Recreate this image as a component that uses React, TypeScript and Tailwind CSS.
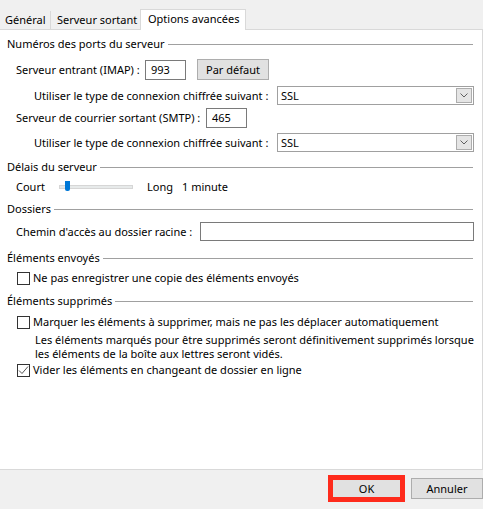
import React from 'react'

const font = { fontFamily: '"Noto Sans", "Open Sans", sans-serif' }

function SectionHeader({ children, className = '' }: { children: React.ReactNode; className?: string }) {
  return (
    <div className={`flex items-center h-[16px] pl-[7px] pr-[9px] ${className}`}>
      <span className="whitespace-nowrap">{children}</span>
      <div className="flex-1 h-px bg-[#a0a0a0] ml-[3px]" />
    </div>
  )
}

function TextBox({ value, className = '' }: { value?: string; className?: string }) {
  return (
    <div className={`h-[20px] border border-[#7a7a7a] bg-white flex items-center pl-[5px] ${className}`}>
      {value}
    </div>
  )
}

function Select({ value }: { value: string }) {
  return (
    <div className="w-[197px] h-[19px] border border-[#a0a0a0] bg-white flex items-center pl-[3px] pr-px">
      <span className="flex-1">{value}</span>
      <div className="w-[16px] h-[15px] border border-[#adadad] bg-[#e5e5e5] flex items-center justify-center">
        <svg width="8" height="5" viewBox="0 0 8 5">
          <path d="M0.5 0.5 L4 4 L7.5 0.5" fill="none" stroke="#606060" strokeWidth="1" />
        </svg>
      </div>
    </div>
  )
}

function Checkbox({ checked = false }: { checked?: boolean }) {
  return (
    <div className="w-[13px] h-[13px] border border-[#333333] bg-white flex items-center justify-center shrink-0">
      {checked && (
        <svg width="11" height="11" viewBox="0 0 11 11">
          <path d="M1 5.5 L4 8.5 L10 1.5" fill="none" stroke="#555555" strokeWidth="1" />
        </svg>
      )}
    </div>
  )
}

function Button({ children, className = '' }: { children: React.ReactNode; className?: string }) {
  return (
    <div className={`h-[21px] border border-[#adadad] bg-[#e1e1e1] flex items-center justify-center whitespace-nowrap ${className}`}>
      {children}
    </div>
  )
}

export default function App() {
  return (
    <div className="w-[483px] h-[509px] flex flex-col bg-[#f0f0f0] text-[11px] leading-[16px] text-black whitespace-nowrap" style={font}>
      {/* tabs */}
      <div className="h-[30px] flex items-end border-b border-[#d9d9d9]">
        <div className="h-[18px] w-[51px] border-r border-[#d9d9d9] flex items-center pl-[5px]">Général</div>
        <div className="h-[18px] w-[89px] flex items-center pl-[6px]">Serveur sortant</div>
        <div className="h-[21px] w-[106px] -mb-px bg-white border border-b-0 border-[#d9d9d9] flex items-center pl-[7px] pb-[2px]">
          Options avancées
        </div>
      </div>

      {/* panel */}
      <div className="h-[440px] bg-white border-r border-b border-[#d9d9d9] flex flex-col">
        <SectionHeader className="mt-[6px]">Numéros des ports du serveur</SectionHeader>

        <div className="mt-[7px] h-[21px] flex items-center pl-[16px]">
          <span className="w-[129px]">Serveur entrant (IMAP) :</span>
          <TextBox value="993" className="w-[41px]" />
          <Button className="ml-[11px] w-[72px]">Par défaut</Button>
        </div>

        <div className="mt-[6px] h-[19px] flex items-center pl-[34px]">
          <span className="w-[243px]">Utiliser le type de connexion chiffrée suivant :</span>
          <Select value="SSL" />
        </div>

        <div className="mt-[3px] h-[20px] flex items-center pl-[16px]">
          <span className="w-[190px]">Serveur de courrier sortant (SMTP) :</span>
          <TextBox value="465" className="w-[41px]" />
        </div>

        <div className="mt-[5px] h-[19px] flex items-center pl-[34px]">
          <span className="w-[243px]">Utiliser le type de connexion chiffrée suivant :</span>
          <Select value="SSL" />
        </div>

        <SectionHeader className="mt-[7px]">Délais du serveur</SectionHeader>

        <div className="mt-[4px] h-[16px] flex items-center pl-[16px]">
          <span className="w-[43px]">Court</span>
          <div className="relative w-[74px] h-[4px] bg-[#e7eaea] border border-[#d6d6d6]">
            <div className="absolute left-[5px] top-[-5px] w-[5px] h-[10px] bg-[#0078d7] rounded-b-[2px]" />
          </div>
          <span className="ml-[14px] w-[35px]">Long</span>
          <span>1 minute</span>
        </div>

        <SectionHeader className="mt-[6px]">Dossiers</SectionHeader>

        <div className="mt-[5px] h-[19px] flex items-center pl-[16px]">
          <span className="w-[184px]">Chemin d'accès au dossier racine :</span>
          <div className="w-[274px] h-[19px] border border-[#7a7a7a] bg-white" />
        </div>

        <SectionHeader className="mt-[9px]">Éléments envoyés</SectionHeader>

        <div className="mt-[4px] h-[16px] flex items-center pl-[17px]">
          <Checkbox />
          <span className="ml-[3px]">Ne pas enregistrer une copie des éléments envoyés</span>
        </div>

        <SectionHeader className="mt-[7px]">Éléments supprimés</SectionHeader>

        <div className="mt-[5px] h-[16px] flex items-center pl-[17px]">
          <Checkbox />
          <span className="ml-[3px]">Marquer les éléments à supprimer, mais ne pas les déplacer automatiquement</span>
        </div>

        <div className="mt-[3px] pl-[35px] pr-[10px] leading-[14px]">
          <div>Les éléments marqués pour être supprimés seront définitivement supprimés lorsque</div>
          <div>les éléments de la boîte aux lettres seront vidés.</div>
        </div>

        <div className="mt-px h-[16px] flex items-center pl-[17px]">
          <Checkbox checked />
          <span className="ml-[3px]">Vider les éléments en changeant de dossier en ligne</span>
        </div>
      </div>

      {/* footer */}
      <div className="flex-1 flex items-start justify-end">
        <div className="mt-[5px] border-[5px] border-[#fe2b1c] w-[77px] h-[27px]">
          <div className="h-full bg-[#e1e1e1] flex items-center justify-center">OK</div>
        </div>
        <Button className="mt-[8px] ml-[6px] w-[72px]">Annuler</Button>
      </div>
    </div>
  )
}
